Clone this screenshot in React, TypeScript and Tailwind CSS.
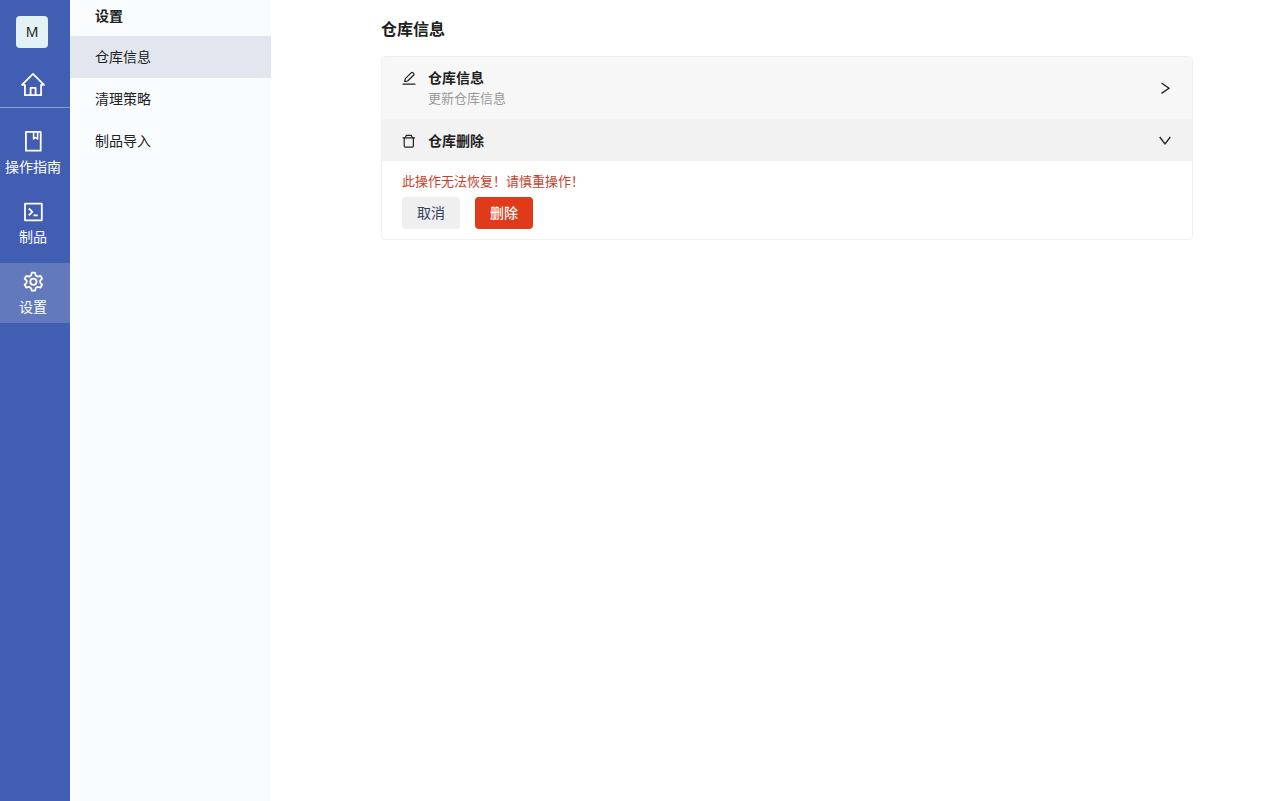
import React, { useState } from 'react';

const HomeIcon: React.FC = () => (
  <svg width="26" height="26" viewBox="0 0 26 26" fill="none" stroke="currentColor" strokeWidth="1.8" strokeLinejoin="round" strokeLinecap="round">
    <path d="M4.9 12.800H2L13 1.900l11 10.900h-2.900V23.200H4.900z" />
    <path d="M10.600 23v-7.200h5V23" />
  </svg>
);

const BookIcon: React.FC = () => (
  <svg width="22" height="22" viewBox="0 0 22 22" fill="none" stroke="currentColor" strokeWidth="1.8" strokeLinejoin="round">
    <path d="M3.900.900h14.800v18.800H3.900z" />
    <path d="M11.600 1v7l2-1.500 2 1.500V1" strokeWidth="1.500" />
  </svg>
);

const CodeIcon: React.FC = () => (
  <svg width="22" height="22" viewBox="0 0 22 22" fill="none" stroke="currentColor" strokeWidth="1.8" strokeLinejoin="round">
    <path d="M3 2.700h16.800v16.600H3z" />
    <path d="m6.800 7.500 3.600 3.400-3.600 3.400M11.500 14.300h4.200" />
  </svg>
);

const SettingIcon: React.FC = () => (
  <svg width="22" height="22" viewBox="0 0 22 22" fill="none" stroke="currentColor" strokeWidth="1.9" strokeLinejoin="round">
    <g transform="translate(11.400 10.700) scale(.94) translate(-11 -11)">
      <path d="M9.300 1.400h3.400l.8 2.900 2.200 1.300 2.900-.8 1.700 3-2.100 2.100v2.200l2.100 2.100-1.700 3-2.900-.8-2.200 1.300-.8 2.900H9.300l-.8-2.900-2.200-1.300-2.900.8-1.700-3 2.100-2.100V9.900L1.700 7.800l1.700-3 2.900.8 2.200-1.300z" />
      <circle cx="11" cy="11" r="3.300" />
    </g>
  </svg>
);

const EditIcon: React.FC = () => (
  <svg width="14" height="14" viewBox="0 0 14 14" fill="none" stroke="currentColor" strokeWidth="1.2" strokeLinejoin="round" strokeLinecap="round" className="mt-1 shrink-0">
    <path d="M1 13.200h12" />
    <path d="M2.700 10.600 3.300 7.700 9.400 1.600q.7-.6 1.400 0l1 1q.6.700 0 1.400L5.600 10z" />
  </svg>
);

const TrashIcon: React.FC = () => (
  <svg width="14" height="14" viewBox="0 0 14 14" fill="none" stroke="currentColor" strokeWidth="1.2" strokeLinejoin="round" strokeLinecap="round" className="mt-0.5 shrink-0">
    <path d="M1 3.800h11.600" />
    <path d="M3.300 3.500 4.400 1.300h4.800l1.100 2.200" />
    <path d="M2.200 4v7.900q0 1.200 1.200 1.200h6.800q1.200 0 1.200-1.200V4" />
  </svg>
);

const RightIcon: React.FC = () => (
  <svg width="14" height="14" viewBox="0 0 14 14" fill="none" stroke="currentColor" strokeWidth="1.3">
    <path d="m3.500 2 7.500 5.200-7.500 5.200" />
  </svg>
);

const DownIcon: React.FC = () => (
  <svg width="14" height="14" viewBox="0 0 14 14" fill="none" stroke="currentColor" strokeWidth="1.3">
    <path d="m1.700 4 5.300 7 5.300-7" />
  </svg>
);

const navItems = [
  { name: '操作指南', icon: <BookIcon /> },
  { name: '制品', icon: <CodeIcon /> },
  { name: '设置', icon: <SettingIcon /> },
];

const menuItems = ['仓库信息', '清理策略', '制品导入'];

const App: React.FC = () => {
  const [nav, setNav] = useState('设置');
  const [menu, setMenu] = useState('仓库信息');
  const [open, setOpen] = useState(true);

  return (
    <div className="flex min-h-screen bg-white text-sm text-[#212121] font-['Noto_Sans_CJK_SC',sans-serif]">
      <nav className="flex w-[70px] shrink-0 flex-col bg-[#425eb2] text-white">
        <div className="flex flex-col items-center gap-6 border-b border-[#8c9dd0] pt-4 pr-1.5 pb-[9px]">
          <button className="h-8 w-8 rounded bg-[#e3f3f5] text-sm text-[#212121] font-['Noto_Sans',sans-serif]">M</button>
          <a href="#home" aria-label="首页" className="pl-0.5">
            <HomeIcon />
          </a>
        </div>
        <div className="flex flex-col gap-2.5 pt-[15px]">
          {navItems.map((item) => (
            <button
              key={item.name}
              onClick={() => setNav(item.name)}
              className={`flex h-[60px] flex-col items-center gap-[3px] pt-2 pr-1 ${
                nav === item.name ? 'bg-[#6279bc]' : ''
              }`}
            >
              {item.icon}
              <span className="leading-5">{item.name}</span>
            </button>
          ))}
        </div>
      </nav>

      <aside className="w-[201px] shrink-0 bg-[#f9fdff]">
        <h2 className="flex h-9 items-center pb-1.5 pl-[25px] font-bold">设置</h2>
        {menuItems.map((item) => (
          <button
            key={item}
            onClick={() => setMenu(item)}
            className={`block h-[42px] w-full pb-0.5 pl-[25px] text-left ${menu === item ? 'bg-[#e2e7ef]' : ''}`}
          >
            {item}
          </button>
        ))}
      </aside>

      <main className="flex-1 pt-4 pr-[87px] pl-[110px]">
        <h1 className="mb-4 text-base leading-6 font-bold">仓库信息</h1>
        <div className="overflow-hidden rounded border border-[#f0f0f0]">
          <button className="flex w-full items-center bg-[#f7f7f7] px-5 py-2.5 text-left">
            <span className="flex flex-1 gap-3">
              <EditIcon />
              <span>
                <span className="block leading-5 font-bold">仓库信息</span>
                <span className="block text-[13px] leading-[22px] text-[#999999]">更新仓库信息</span>
              </span>
            </span>
            <RightIcon />
          </button>
          <button
            onClick={() => setOpen(!open)}
            className="flex w-full items-center gap-3 bg-[#f2f2f2] px-5 py-2.5 text-left"
          >
            <TrashIcon />
            <span className="flex-1 leading-[22px] font-bold">仓库删除</span>
            <DownIcon />
          </button>
          {open && (
            <div className="px-5 py-2.5">
              <p className="mb-1.5 text-[13px] leading-5 text-[#c9402c]">此操作无法恢复！请慎重操作！</p>
              <div className="flex gap-[15px]">
                <button className="h-8 w-[58px] rounded bg-[#efeff0] pb-0.5 text-[#344063]">取消</button>
                <button className="h-8 w-[58px] rounded bg-[#df3a19] pb-0.5 font-medium text-white">删除</button>
              </div>
            </div>
          )}
        </div>
      </main>
    </div>
  );
};

export default App;
